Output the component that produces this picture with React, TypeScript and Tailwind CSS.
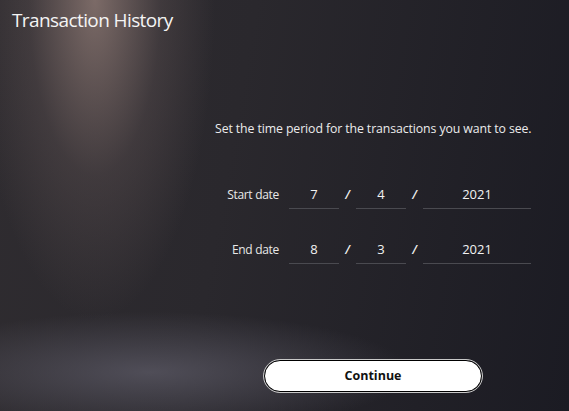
import React from "react";

function DateField({ value, w }: { value: string; w: string }) {
  return (
    <div className={`${w} h-[28px] flex items-center justify-center border-b border-[#4a4a50] text-[13px] text-[#f2f2f2]`}>
      {value}
    </div>
  );
}

function Slash() {
  return <div className="w-[17px] text-center text-[12px] text-[#f2f2f2] italic font-semibold">/</div>;
}

function DateRow({ label, m, d, y }: { label: string; m: string; d: string; y: string }) {
  return (
    <div className="flex items-center">
      <div className="w-[74px] text-right text-[12px] tracking-[-0.3px] text-[#e8e8e8] pr-[10px]">{label}</div>
      <DateField value={m} w="w-[50px]" />
      <Slash />
      <DateField value={d} w="w-[50px]" />
      <Slash />
      <DateField value={y} w="w-[108px]" />
    </div>
  );
}

export default function App() {
  return (
    <div
      className="w-[569px] h-[411px] overflow-hidden flex flex-col bg-[#22212a] bg-[radial-gradient(ellipse_120px_320px_at_95px_0px,rgba(150,128,122,0.75),rgba(110,95,95,0.3)_55%,transparent),radial-gradient(ellipse_260px_60px_at_150px_372px,rgba(92,90,102,0.75),transparent),linear-gradient(100deg,#2f2c30_0%,#2a282d_40%,#1b1b23_100%)]"
      style={{ fontFamily: '"Open Sans", "Noto Sans", sans-serif' }}
    >
      <div className="pl-[12px] pt-[6px] text-[19px] text-[#f4f4f4] tracking-[-0.6px]">Transaction History</div>
      <div className="ml-[215px] mt-[85px] text-[12.3px] tracking-[-0.1px] text-[#ececec]">
        Set the time period for the transactions you want to see.
      </div>
      <div className="ml-[215px] mt-[43px] flex flex-col gap-[27px]">
        <DateRow label="Start date" m="7" d="4" y="2021" />
        <DateRow label="End date" m="8" d="3" y="2021" />
      </div>
      <div className="ml-[264px] mt-[96px]">
        <button className="w-[218px] h-[32px] rounded-full bg-white border border-black outline outline-1 outline-[#c8c8c8] text-[12.5px] font-bold text-[#111]">
          Continue
        </button>
      </div>
    </div>
  );
}
